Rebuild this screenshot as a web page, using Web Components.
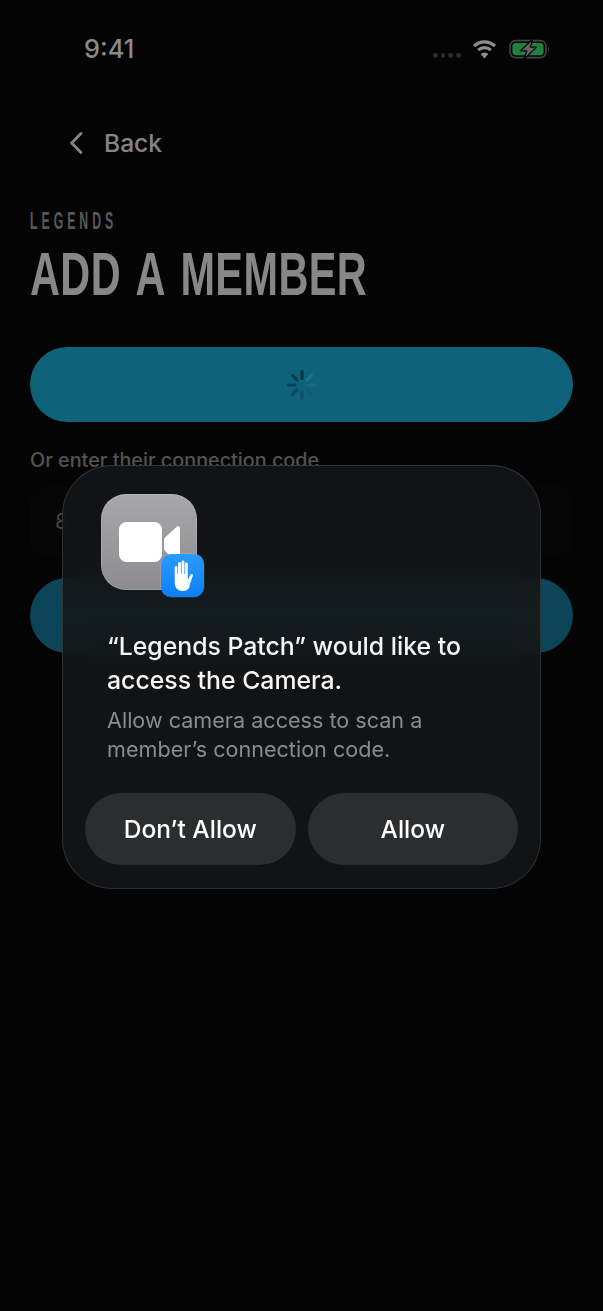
<!DOCTYPE html>
<html><head><meta charset="utf-8"><title>Add a member</title>
<style>
html,body{margin:0;height:1311px;overflow:hidden;background:#040404;font-family:Inter,"Noto Sans",sans-serif}
</style></head><body>
<app-screen>
  <status-bar></status-bar>
  <back-link>Back</back-link>
  <page-title eyebrow="LEGENDS">ADD A MEMBER</page-title>
  <teal-button class="first" spinner></teal-button>
  <code-field label="Or enter their connection code" value="8"></code-field>
  <teal-button class="dim"></teal-button>
  <permission-dialog slot="overlay">
    <span slot="title">“Legends Patch” would like to access the Camera.</span>
    <span slot="body">Allow camera access to scan a member’s connection code.</span>
    <dialog-button slot="actions">Don’t Allow</dialog-button>
    <dialog-button slot="actions">Allow</dialog-button>
  </permission-dialog>
</app-screen>
<script>
function def(name, html, init){
  customElements.define(name, class extends HTMLElement{
    constructor(){super();this.attachShadow({mode:'open'}).innerHTML=html;}
    connectedCallback(){ if(init) init(this); }
  });
}
def('app-screen',`<style>
:host{display:block;position:relative;width:603px;height:1311px;overflow:hidden;background:#040404;color:#888}
.flow{display:flex;flex-direction:column;padding:0 30px}
</style><div class="flow"><slot></slot></div><slot name="overlay"></slot>`);

def('status-bar',`<style>
:host{display:flex;align-items:center;height:98px;margin:0 -30px;padding:0 53px 0 84px;box-sizing:border-box}
.t{font:500 25.400px/1 Inter,sans-serif;color:#8a8a8a;flex:1}
.r{display:flex;align-items:flex-end;gap:12px;height:20px}
.dots{display:flex;gap:3px;padding-bottom:1px;margin-right:-1px}
.dots i{width:4.800px;height:4.800px;border-radius:50%;background:#2b2b2b;display:block}
svg{display:block}
</style>
<div class="t">9:41</div>
<div class="r">
<div class="dots"><i></i><i></i><i></i><i></i></div>
<svg width="25" height="20" viewBox="0 0 25 20"><g fill="none" stroke="#8c8c8c" stroke-width="3.200"><path d="M2 7.200a15 15 0 0 1 21 0"/><path d="M6.200 11.200a9 9 0 0 1 12.600 0"/></g><path d="M12.500 19.500l-3.900-4.400a5.600 5.600 0 0 1 7.800 0z" fill="#8c8c8c"/></svg>
<svg width="41" height="20" viewBox="0 0 41 20"><rect x="1" y="1.600" width="36" height="17" rx="5.500" fill="none" stroke="#444" stroke-width="1.600"/><rect x="3.400" y="4" width="31.200" height="12.200" rx="3.400" fill="#20803e"/><path d="M39 7.500c1.400.5 1.400 4.500 0 5z" fill="#3e3e3e"/><path d="M24 0 11.500 11.800h6.300L15 20 27.500 8.100h-6.300z" fill="#666" stroke="#0a0a0a" stroke-width="1.300" stroke-linejoin="round"/></svg>
</div>`);

def('back-link',`<style>
:host{display:flex;align-items:center;height:34px;margin:28px 0 0 39px;gap:21px;font:500 24.600px/1 Inter,sans-serif;color:#858585}
svg{display:block}
</style><svg width="14" height="24" viewBox="0 0 14 24"><path d="M12 2.500 2.600 12l9.400 9.500" fill="none" stroke="#858585" stroke-width="2.800" stroke-linecap="round" stroke-linejoin="round"/></svg><slot></slot>`);

def('page-title',`<style>
:host{display:block;margin-top:49px}
.e{font:700 24.500px/24px "Liberation Sans",sans-serif;letter-spacing:8px;color:#585858;height:24px;transform:scaleX(.5);transform-origin:0 50%;white-space:nowrap}
h1{margin:11px 0 0;font:700 61px/60px "Liberation Sans",sans-serif;color:#878787;letter-spacing:.6px;word-spacing:6px;white-space:nowrap;transform:scaleX(.68);transform-origin:0 50%}
</style><div class="e"></div><h1><slot></slot></h1>`, el=>{el.shadowRoot.querySelector('.e').textContent=el.getAttribute('eyebrow')});

def('teal-button',`<style>
:host{display:flex;align-items:center;justify-content:center;height:75px;border-radius:38px;background:#0e637b}
:host(.first){margin-top:43px}
:host(.dim){background:#0c4558}
svg{display:none}
:host([spinner]) svg{display:block}
</style><svg width="32" height="32" viewBox="0 0 32 32"><g stroke-width="3.200" stroke-linecap="round">
<path d="M16 2.500v7" stroke="#073346"/><path d="M25.500 6.500 21 11" stroke="#1f7289"/><path d="M29.500 16h-6.500" stroke="#1a6a82"/><path d="M25.500 25.500 21 21" stroke="#115a72"/><path d="M16 29.500V23" stroke="#0d5069"/><path d="M6.500 25.500 11 21" stroke="#0b4a62"/><path d="M2.500 16H9" stroke="#0a4258"/><path d="M6.500 6.500 11 11" stroke="#083a50"/></g></svg>`);

def('code-field',`<style>
:host{display:block;margin-top:26px}
.l{font:500 19.800px/24px Inter,sans-serif;color:#535353;white-space:nowrap}
.f{margin:14px 0 23px;height:69px;border-radius:14px;background:#060606;box-sizing:border-box;padding:0 25px;display:flex;align-items:center;font:400 22px/1 Inter,sans-serif;color:#444}
</style><div class="l"></div><div class="f"></div>`, el=>{el.shadowRoot.querySelector('.l').textContent=el.getAttribute('label');el.shadowRoot.querySelector('.f').textContent=el.getAttribute('value')});

def('permission-dialog',`<style>
:host{position:absolute;left:62px;top:465px;width:479px;height:424px;box-sizing:border-box;border-radius:50px;
 background:rgba(21,22,23,.87);-webkit-backdrop-filter:blur(18px);backdrop-filter:blur(18px);
 border:1px solid rgba(150,160,165,.2);border-top-color:rgba(90,160,190,.3);
 display:flex;flex-direction:column;padding:28px 22px 22px}
.icon{position:relative;width:96px;height:96px;margin-left:16px;border-radius:25px;background:linear-gradient(#a8a8aa,#8c8c8e);box-shadow:inset 0 0 0 1px rgba(255,255,255,.14);flex:none}
.icon>svg.cam{position:absolute;left:18px;top:28px}
.badge{position:absolute;left:60px;top:60px;width:43px;height:43px;border-radius:10px;background:linear-gradient(#2a9bff,#0c80f8);box-shadow:0 0 0 .5px rgba(255,255,255,.2);display:flex;align-items:center;justify-content:center}
.title{margin:39px 0 0 22px;font:550 24.800px/34px Inter,sans-serif;color:#f5f5f5;width:390px}
.body{margin:9px 0 0 22px;font:400 21.600px/29px Inter,sans-serif;color:#8b8b8d;width:340px}
.actions{margin-top:29px;display:grid;grid-template-columns:1fr 1fr;gap:12px}
</style>
<div class="icon">
<svg class="cam" width="62" height="42" viewBox="0 0 62 42"><rect x="0" y="0" width="43" height="40" rx="7.500" fill="#fff"/><path d="M46 15.500 58 4.600c1.200-1 3-.3 3 1.400v33c0 1.500-1.600 2.300-3 1.400L46 29c-.7-.6-1-1.300-1-2V17.500c0-.8.300-1.500 1-2z" fill="#fff"/></svg>
<div class="badge"><svg width="24" height="31" viewBox="0 0 24 31"><path d="M3.700 7.500c0-2 2.700-2 2.700 0V14h.7V3.500c0-2 2.800-2 2.800 0V14h.7V2c0-2 2.800-2 2.800 0v12h.7V4c0-2 2.700-2 2.700 0v14.500l.8.300 1.700-3.800c.8-1.900 3.300-1 2.500 1l-3 8.500C19 29 15.500 31 11.500 31 6.300 31 3.700 27.500 3.700 22z" fill="#fff"/></svg></div>
</div>
<div class="title"><slot name="title"></slot></div>
<div class="body"><slot name="body"></slot></div>
<div class="actions"><slot name="actions"></slot></div>`);

def('dialog-button',`<style>
:host{display:flex;align-items:center;justify-content:center;height:72px;border-radius:36px;background:#2c2d2f;color:#fff;font:500 24.500px/1 Inter,sans-serif}
</style><slot></slot>`);
</script>
</body></html>
